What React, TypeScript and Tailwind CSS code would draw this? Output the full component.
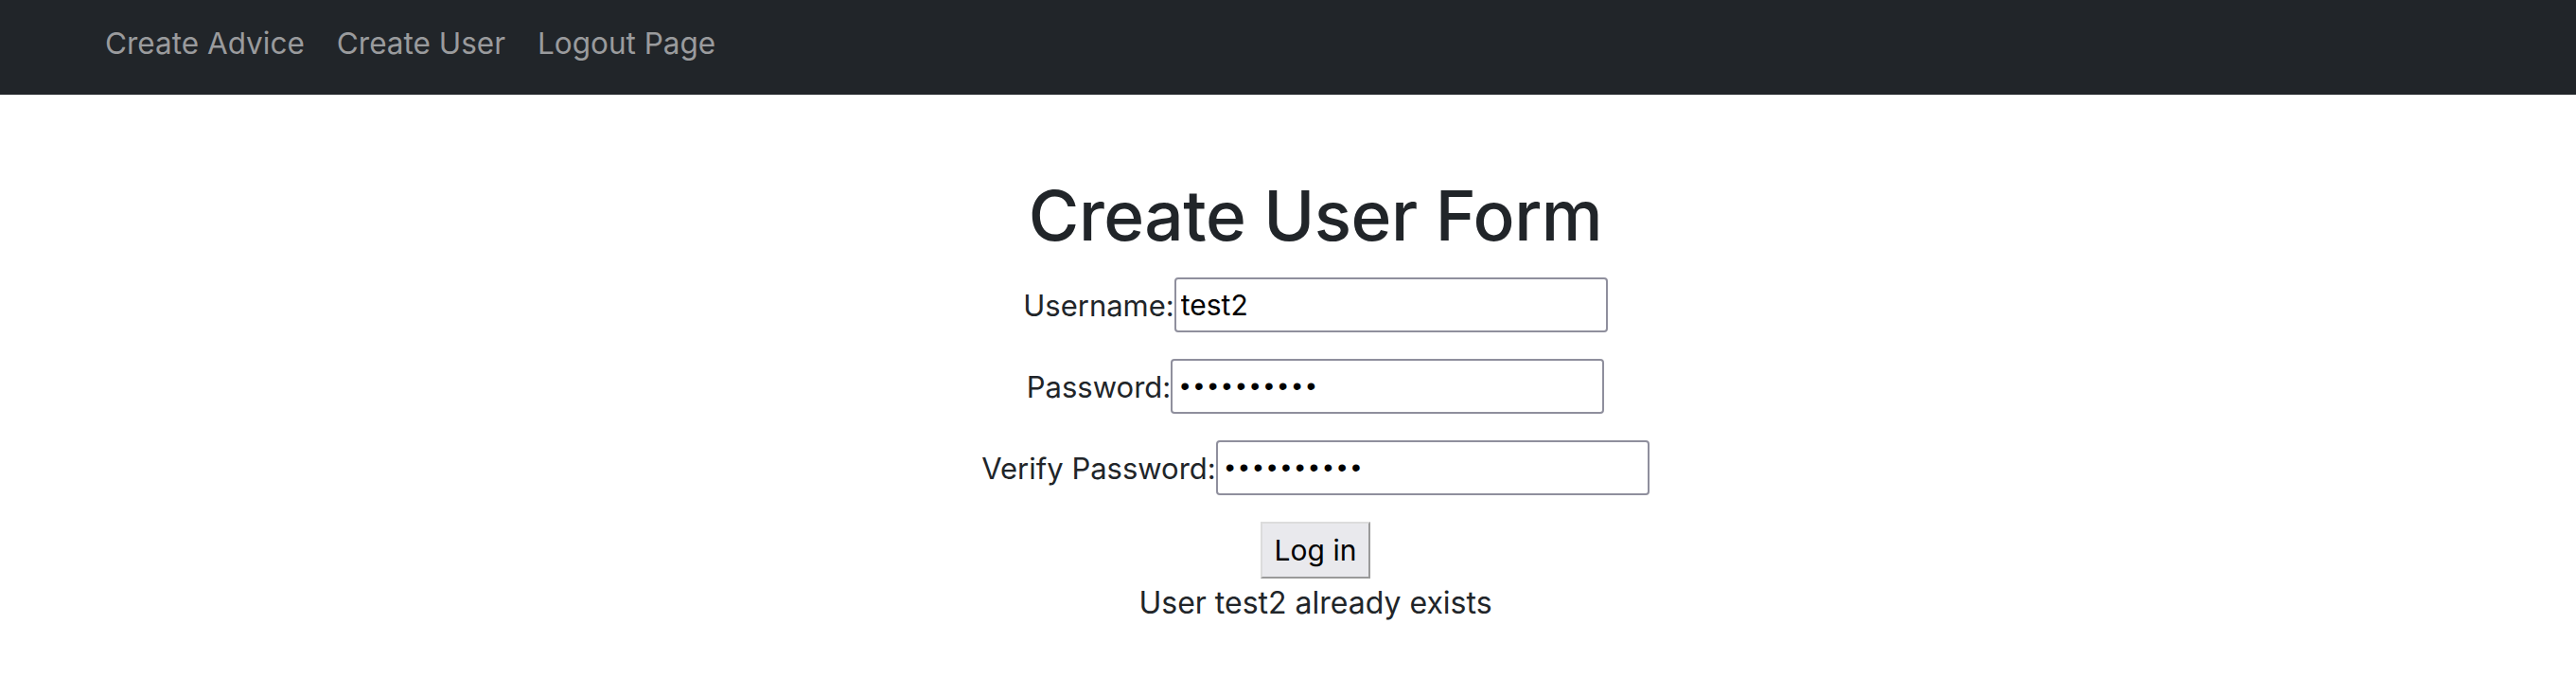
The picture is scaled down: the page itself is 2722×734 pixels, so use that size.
import React from 'react';

const navLinks = ['Create Advice', 'Create User', 'Logout Page'];

const Field: React.FC<{ label: string; type: string; value: string }> = ({ label, type, value }) => (
  <div className="flex items-center justify-center">
    <label className="text-[31px] text-[#212529] leading-none">{label}</label>
    <input
      type={type}
      defaultValue={value}
      className={
        type === 'password'
          ? "w-[458px] h-[58px] border-2 border-[#8f8f9d] rounded-[4px] px-[8px] text-[28px] tracking-[5px] text-black bg-white outline-none font-['Liberation_Sans']"
          : 'w-[458px] h-[58px] border-2 border-[#8f8f9d] rounded-[4px] px-[5px] text-[30px] text-black bg-white outline-none'
      }
    />
  </div>
);

export default function App() {
  return (
    <div className="min-h-screen bg-white" style={{ fontFamily: 'Inter, "Noto Sans", sans-serif' }}>
      <nav className="h-[100px] bg-[#212529] flex items-center pl-[111px] pb-[8px] gap-[34px]">
        {navLinks.map((link) => (
          <a key={link} href="#" className="text-[31.5px] text-[#9a9b9d] leading-none">
            {link}
          </a>
        ))}
      </nav>

      <main className="flex flex-col items-center pl-[58px] pt-[91px] text-[#212529]">
        <h1 className="text-[73px] font-medium leading-none tracking-[-0.5px]">Create User Form</h1>
        <form className="flex flex-col items-center gap-[28px] mt-[29px]" onSubmit={(e) => e.preventDefault()}>
          <Field label="Username:" type="text" value="test2" />
          <Field label="Password:" type="password" value="abcdefghij" />
          <Field label="Verify Password:" type="password" value="abcdefghij" />
          <button
            type="submit"
            className="w-[116px] h-[60px] bg-[#e9e9ed] border-2 border-t-[#dcdcdc] border-l-[#dcdcdc] border-b-[#9a9a9a] border-r-[#9a9a9a] text-[30px] text-black"
          >
            Log in
          </button>
        </form>
        <p className="text-[32px] leading-none mt-[10px]">User test2 already exists</p>
      </main>
    </div>
  );
}
